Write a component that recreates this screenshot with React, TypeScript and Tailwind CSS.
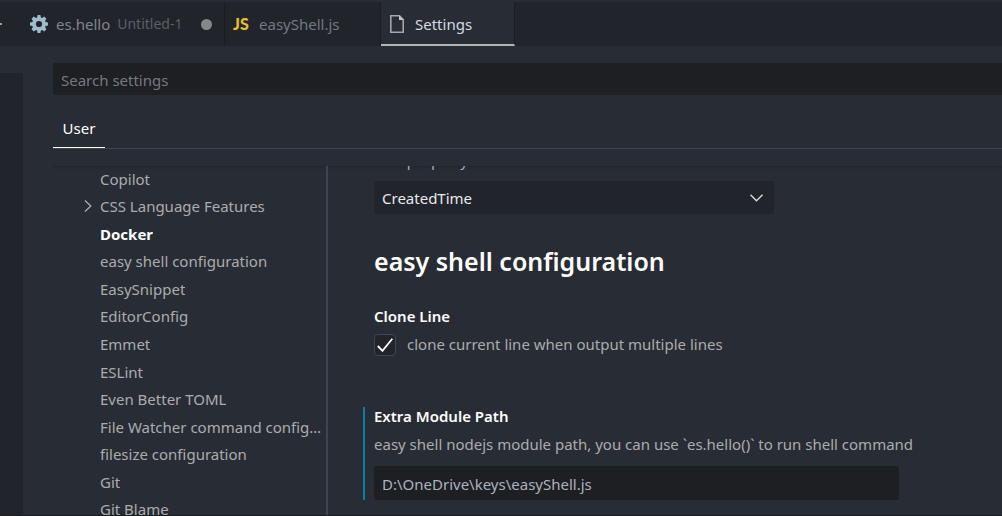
import React from "react";

const categories = [
  "Copilot",
  "CSS Language Features",
  "Docker",
  "easy shell configuration",
  "EasySnippet",
  "EditorConfig",
  "Emmet",
  "ESLint",
  "Even Better TOML",
  "File Watcher command configuration",
  "filesize configuration",
  "Git",
  "Git Blame",
];

function GearIcon() {
  return (
    <svg className="size-[18px] shrink-0" viewBox="0 0 18 18" fill="#9dbccd" aria-hidden="true">
      <path
        fillRule="evenodd"
        d="M7.6 0h2.8l.5 2.4 1.2.5L14.200 1.600l2.200 2.200-1.300 2.100.5 1.200 2.400.5v2.800l-2.400.5-.5 1.200 1.300 2.100-2.200 2.200-2.100-1.300-1.200.5-.5 2.400H7.600l-.5-2.400-1.200-.5-2.100 1.300-2.200-2.200 1.300-2.100-.5-1.200L0 10.400V7.600l2.400-.5.5-1.200-1.300-2.100 2.200-2.200 2.100 1.300 1.200-.5zM9 5.900a3.100 3.100 0 1 0 0 6.200 3.100 3.100 0 0 0 0-6.200z"
      />
    </svg>
  );
}

function FileIcon() {
  return (
    <svg className="h-[18px] w-[14px] shrink-0" viewBox="0 0 14 18" aria-hidden="true">
      <path d="M.8.8h8.700l3.700 3.700v12.700H.8z" fill="none" stroke="#a4a6a8" strokeWidth="1.600" />
      <path d="M9 .4v4.600h4.700z" fill="#c5c8c6" />
    </svg>
  );
}

function TabBar() {
  return (
    <nav className="flex h-[46px] border-t-2 border-[#282c34] bg-[#21242b]">
      <div className="flex w-[30px] shrink-0 items-center">
        <span className="size-[2px] rounded-full bg-[#d0cdb8]" />
      </div>
      <button className="flex w-[195px] shrink-0 items-center border-r border-[#1b1d23] text-left text-[#80848b]">
        <GearIcon />
        <span className="ml-2">es.hello</span>
        <span className="ml-[7px] text-sm text-[#5c5f66]">Untitled-1</span>
        <span className="mr-3 ml-auto size-[11px] rounded-full bg-[#85878a]" />
      </button>
      <button className="flex w-[156px] shrink-0 items-center border-r border-[#1b1d23] pl-2 text-left text-[#74787f]">
        <span className="w-[26px] font-['Lato'] text-base font-black text-[#e5bd2d]">JS</span>
        easyShell.js
      </button>
      <button className="flex w-[134px] shrink-0 items-center gap-[11px] border-r border-b-2 border-r-[#1b1d23] border-b-[#b4b4b4] bg-[#282c34] pt-0.5 pl-[9px] text-left text-[#d7dae0]">
        <FileIcon />
        Settings
      </button>
    </nav>
  );
}

function Contents() {
  return (
    <ul className="grid h-[358px] w-[275px] shrink-0 auto-rows-fr border-r-2 border-[#3e4452] text-[#abacae]">
      {categories.map((name) => (
        <li key={name} className="flex min-w-0 items-center pb-0.5">
          <span className="flex w-[47px] shrink-0 justify-end pr-2">
            {name === "CSS Language Features" && (
              <svg className="h-3 w-2" viewBox="0 0 8 12" fill="none" stroke="#abacae" strokeWidth="1.300" aria-hidden="true">
                <path d="M1 .5 6.800 6 1 11.500" />
              </svg>
            )}
          </span>
          <a
            href="#settings"
            className={name === "Docker" ? "truncate font-bold text-white" : "truncate"}
          >
            {name}
          </a>
        </li>
      ))}
    </ul>
  );
}

function SettingsPane() {
  return (
    <main id="settings" className="min-w-0 flex-1 pl-[35px]">
      <label htmlFor="sort" className="-mt-4 ml-[11px] block text-[#abacae]">
        Sort property
      </label>
      <div className="mt-[11px] ml-[11px] grid max-w-[400px] items-center">
        <select
          id="sort"
          className="col-start-1 row-start-1 h-[33px] w-full appearance-none rounded-[3px] bg-[#21242b] pl-2 text-[#e8eaed]"
        >
          <option>CreatedTime</option>
        </select>
        <svg
          className="pointer-events-none col-start-1 row-start-1 mr-[11px] h-2 w-[13px] justify-self-end"
          viewBox="0 0 13 8"
          fill="none"
          stroke="#d7dae0"
          strokeWidth="1.400"
          aria-hidden="true"
        >
          <path d="m.5.8 6 6 6-6" />
        </svg>
      </div>
      <h2 className="mt-[27px] ml-[11px] text-[25px] leading-10 font-semibold text-white">
        easy shell configuration
      </h2>
      <section className="mt-[25px] ml-[11px]">
        <h3 className="font-semibold text-white">Clone Line</h3>
        <label className="mt-2 flex items-center gap-[11px] text-[#abacae]">
          <span className="grid place-items-center">
            <input
              type="checkbox"
              defaultChecked
              className="col-start-1 row-start-1 size-[22px] appearance-none rounded-[4px] border border-[#404754] bg-[#21242b]"
            />
            <svg
              className="pointer-events-none col-start-1 row-start-1 h-[14px] w-4"
              viewBox="0 0 16 14"
              fill="none"
              stroke="#fff"
              strokeWidth="1.800"
              aria-hidden="true"
            >
              <path d="m.8 8 4.700 4.800L15.300.8" />
            </svg>
          </span>
          <span className="pb-0.5">clone current line when output multiple lines</span>
        </label>
      </section>
      <section className="mt-[51px] border-l-2 border-[#0c7d9d] pl-[9px]">
        <h3 className="leading-[18px] font-semibold text-white">Extra Module Path</h3>
        <label htmlFor="module-path" className="mt-[9px] block text-[#abacae]">
          easy shell nodejs module path, you can use `es.hello()` to run shell command
        </label>
        <input
          id="module-path"
          defaultValue="D:\OneDrive\keys\easyShell.js"
          className="mt-3 block h-[34px] w-full max-w-[525px] rounded-[3px] bg-[#1d1f23] px-2 pt-0.5 text-[#abb2bf]"
        />
      </section>
    </main>
  );
}

export default function App() {
  return (
    <div className="flex h-screen flex-col overflow-hidden border-b border-[#1b1d23] bg-[#282c34] font-['Noto_Sans',sans-serif] text-[15px] leading-5">
      <TabBar />
      <div className="flex min-h-0 flex-1">
        <aside className="mt-[27px] w-[23px] shrink-0 bg-[#21242b]" />
        <div className="flex min-w-0 flex-1 flex-col pl-[30px]">
          <input
            type="search"
            aria-label="Search settings"
            placeholder="Search settings"
            className="mt-[17px] h-8 w-full shrink-0 rounded-l-[3px] bg-[#1d1f23] px-2 pt-0.5 text-[#abb2bf] placeholder:text-[#76797e]"
          />
          <div className="mt-[15px] flex h-[39px] shrink-0 border-b border-[#3e4452]">
            <button className="w-[52px] border-b border-white pb-0.5 text-white">User</button>
          </div>
          <div className="mt-[17px] flex min-h-0 flex-1 overflow-hidden shadow-[inset_0_3px_3px_-2px_#22252c]">
            <Contents />
            <SettingsPane />
          </div>
        </div>
      </div>
    </div>
  );
}
